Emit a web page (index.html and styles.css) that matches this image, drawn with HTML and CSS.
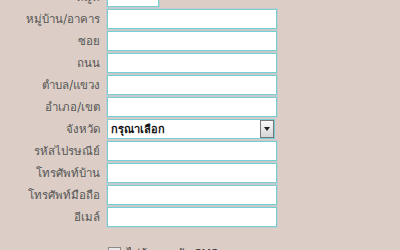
FILE: index.html
```html
<!DOCTYPE html>
<html lang="th">
<head>
  <meta charset="UTF-8" />
  <title>ที่อยู่</title>
  <link rel="stylesheet" href="styles.css">
</head>
<body>
  <form class="address-form">
    <div class="row">
      <label class="label">หมู่ที่</label>
      <input class="field field-short" type="text">
    </div>
    <div class="row">
      <label class="label">หมู่บ้าน/อาคาร</label>
      <input class="field" type="text">
    </div>
    <div class="row">
      <label class="label">ซอย</label>
      <input class="field" type="text">
    </div>
    <div class="row">
      <label class="label">ถนน</label>
      <input class="field" type="text">
    </div>
    <div class="row">
      <label class="label">ตำบล/แขวง</label>
      <input class="field" type="text">
    </div>
    <div class="row">
      <label class="label">อำเภอ/เขต</label>
      <input class="field" type="text">
    </div>
    <div class="row">
      <label class="label">จังหวัด</label>
      <div class="select">
        <span class="select-text">กรุณาเลือก</span>
        <span class="select-btn"><span class="arrow"></span></span>
      </div>
    </div>
    <div class="row">
      <label class="label">รหัสไปรษณีย์</label>
      <input class="field" type="text">
    </div>
    <div class="row">
      <label class="label">โทรศัพท์บ้าน</label>
      <input class="field" type="text">
    </div>
    <div class="row">
      <label class="label">โทรศัพท์มือถือ</label>
      <input class="field" type="text">
    </div>
    <div class="row">
      <label class="label">อีเมล์</label>
      <input class="field" type="text">
    </div>

    <div class="check-row">
      <span class="checkbox"></span>
      <span class="check-text">ไม่ต้องการรับ SMS</span>
    </div>
  </form>
</body>
</html>
```

FILE: styles.css
```css
body {
  margin: 0;
  background: #dccec6;
  font-family: Tahoma, "DejaVu Sans", "Noto Sans", sans-serif;
  font-size: 11px;
  color: #555;
  overflow: hidden;
}

.address-form {
  margin-top: -14px;
  display: flex;
  flex-direction: column;
}

.row {
  display: flex;
  align-items: center;
  height: 22px;
}

.label {
  width: 100px;
  margin-right: 7px;
  text-align: right;
  font-size: 11.5px;
}

.field {
  box-sizing: border-box;
  width: 170px;
  height: 20px;
  margin: 0;
  border: 1px solid #79cdd5;
  box-shadow: 0 0 0 1px #c4cccb;
  background: #fff;
  padding: 0 3px;
}

.field-short {
  width: 52px;
}

.select {
  box-sizing: border-box;
  width: 168px;
  height: 20px;
  border: 1px solid #79cdd5;
  background: #fff;
  display: flex;
  align-items: center;
  justify-content: space-between;
}

.select-text {
  padding-left: 3px;
  font-size: 11px;
  font-weight: bold;
  color: #111;
}

.select-btn {
  box-sizing: border-box;
  width: 14px;
  height: 18px;
  border: 1px solid #777;
  background: linear-gradient(#fafafa, #d6d6d6);
  display: flex;
  align-items: center;
  justify-content: center;
}

.arrow {
  width: 0;
  height: 0;
  border-left: 3px solid transparent;
  border-right: 3px solid transparent;
  border-top: 4px solid #222;
}

.check-row {
  display: flex;
  align-items: flex-start;
  margin-top: 19px;
  padding-left: 108px;
  gap: 6px;
}

.checkbox {
  width: 11px;
  height: 11px;
  border: 1px solid #8a8a8a;
  background: linear-gradient(#e6e6e6, #fff);
}

.check-text {
  color: #333;
  line-height: 13px;
}
```
